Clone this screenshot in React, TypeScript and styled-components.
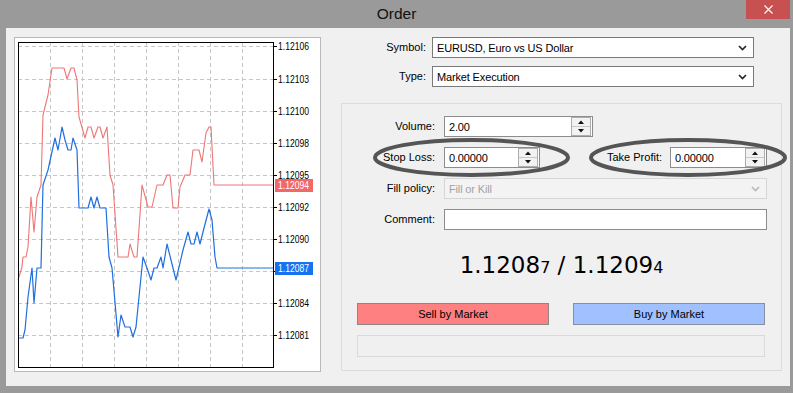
import styled, { createGlobalStyle } from 'styled-components';

const GlobalStyle = createGlobalStyle`
  html, body {
    margin: 0;
    padding: 0;
  }
  body {
    background: #9a9a9a;
    font-family: 'Liberation Sans', Arial, sans-serif;
  }
`;

const Window = styled.div`
  width: 793px;
  height: 393px;
  display: flex;
  flex-direction: column;
  overflow: hidden;
`;

const TitleBar = styled.div`
  height: 28px;
  flex-shrink: 0;
  display: grid;
  grid-template-columns: 1fr auto 1fr;
  align-items: start;
`;

const Title = styled.div`
  grid-column: 2;
  font-size: 15.5px;
  line-height: 18px;
  padding-top: 5px;
  color: #111;
`;

const CloseButton = styled.div`
  justify-self: end;
  width: 44px;
  height: 19px;
  margin-right: 3px;
  background: #c75050;
  display: flex;
  align-items: center;
  justify-content: center;
`;

const Body = styled.div`
  margin: 0 3px 0 6px;
  height: 358px;
  box-sizing: border-box;
  padding: 9px 0 0 8px;
  background: #f0f0f0;
  display: flex;
  align-items: flex-start;
`;

const ChartPanel = styled.div`
  width: 307px;
  height: 335px;
  flex-shrink: 0;
  box-sizing: border-box;
  border: 1px solid #b9b9b9;
  background: #fff;
`;

const ChartSvg = styled.svg`
  display: block;
`;

const FormSide = styled.div`
  margin-left: 20px;
  width: 441px;
  display: flex;
  flex-direction: column;
`;

const TopGrid = styled.div`
  display: grid;
  grid-template-columns: 85px 322px;
  grid-auto-rows: 21px;
  column-gap: 6px;
  row-gap: 8px;
`;

const Label = styled.div`
  font-size: 11px;
  line-height: 21px;
  text-align: right;
  color: #000;
  white-space: nowrap;
`;

const Field = styled.div<{ $width: number; $disabled?: boolean; $combo?: boolean }>`
  width: ${(p) => p.$width}px;
  height: 21px;
  box-sizing: border-box;
  border: 1px solid ${(p) => (p.$disabled ? '#d6d6d6' : p.$combo ? '#7a7a7a' : '#8c8c8c')};
  background: ${(p) => (p.$disabled ? '#f3f3f3' : '#fff')};
  color: ${(p) => (p.$disabled ? '#a2a2a2' : '#000')};
  display: flex;
  align-items: center;
  padding: 0 1px 0 4px;
  font-size: 11px;
  letter-spacing: -0.15px;
`;

const FieldValue = styled.span`
  flex: 1;
  white-space: nowrap;
`;

const Chevron = styled.svg`
  margin-right: 5px;
  flex-shrink: 0;
`;

const Spinner = styled.div`
  width: 20px;
  height: 19px;
  box-sizing: border-box;
  border: 1px solid #adadad;
  background: #f2f2f2;
  display: flex;
  flex-direction: column;
  flex-shrink: 0;
`;

const SpinHalf = styled.div<{ $bottom?: boolean }>`
  flex: 1;
  display: flex;
  align-items: center;
  justify-content: center;
  border-top: ${(p) => (p.$bottom ? '1px solid #c8c8c8' : 'none')};
`;

const Group = styled.div`
  position: relative;
  margin-top: 16px;
  height: 268px;
  box-sizing: border-box;
  border: 1px solid #dcdcdc;
  padding-top: 12px;
`;

const FieldGrid = styled.div`
  display: grid;
  grid-template-columns: 93px 323px;
  grid-auto-rows: 21px;
  column-gap: 9px;
  row-gap: 10px;
`;

const PairCell = styled.div`
  display: flex;
  align-items: center;
`;

const PairLabel = styled(Label)`
  flex: 1;
  padding-right: 8px;
`;

const Price = styled.div`
  margin-top: 21px;
  height: 28px;
  text-align: center;
  font-family: 'DejaVu Sans', Verdana, sans-serif;
  font-size: 23px;
  line-height: 28px;
  color: #000;
`;

const PriceTail = styled.span`
  font-size: 16px;
  line-height: 0;
`;

const ButtonRow = styled.div`
  margin-top: 24px;
  padding-left: 15px;
  display: grid;
  grid-template-columns: 192px 192px;
  column-gap: 24px;
`;

const MarketButton = styled.div<{ $side: 'sell' | 'buy' }>`
  height: 22px;
  box-sizing: border-box;
  border: 1px solid ${(p) => (p.$side === 'sell' ? '#8e8686' : '#8790a2')};
  background: ${(p) => (p.$side === 'sell' ? '#ff8080' : '#a0c0ff')};
  font-size: 11px;
  line-height: 20px;
  text-align: center;
  color: #000;
`;

const StatusBox = styled.div`
  margin: 10px 0 0 15px;
  width: 408px;
  height: 22px;
  box-sizing: border-box;
  border: 1px solid #dadada;
`;

const Highlight = styled.svg<{ $left: number }>`
  position: absolute;
  top: 34px;
  left: ${(p) => p.$left}px;
  overflow: visible;
  pointer-events: none;
`;

const gridY = [46, 79, 111, 143, 175, 207, 239, 271, 303, 335];
const gridX = [50, 82, 114, 146, 178, 210, 242];
const axisLabels: [number, string][] = [
  [46, '1.12106'],
  [79, '1.12103'],
  [111, '1.12100'],
  [143, '1.12098'],
  [175, '1.12095'],
  [207, '1.12092'],
  [239, '1.12090'],
  [303, '1.12084'],
  [335, '1.12081'],
];

const askLine =
  '18,280 22,267 23,257 26,257 28,247 31,197 34,232 37,197 41,185 43,115 48,95 52,68 64,68 67,79 71,68 74,68 77,80 79,117 85,138 88,127 91,127 94,138 98,127 100,127 103,138 107,127 110,175 113,185 118,257 128,257 130,244 134,257 137,257 141,200 142,185 148,207 152,207 157,185 163,185 167,175 170,175 173,208 178,208 180,187 185,175 190,175 193,150 199,150 202,162 206,133 209,127 211,127 214,185 273,185';

const bidLine =
  '18,338 23,338 25,330 28,297 32,268 34,303 37,268 41,268 43,185 48,170 55,138 58,150 62,127 65,140 68,150 71,150 73,138 77,150 79,208 88,208 91,197 94,208 97,197 100,208 106,208 109,257 112,268 118,337 121,315 125,327 130,327 133,337 136,327 143,257 147,268 151,280 154,268 157,268 161,257 163,268 167,244 171,260 176,280 183,250 188,232 191,244 194,244 197,232 200,244 203,232 209,209 212,220 215,257 217,268 273,268';

const TickChart = () => (
  <ChartSvg width={305} height={333} viewBox="15 38 305 333">
    {gridY.map((y) => (
      <line key={`h${y}`} x1={18} x2={273} y1={y + 0.5} y2={y + 0.5} stroke="#c6c6c6" strokeDasharray="4 3" />
    ))}
    {gridX.map((x) => (
      <line key={`v${x}`} x1={x + 0.5} x2={x + 0.5} y1={42} y2={367} stroke="#c6c6c6" strokeDasharray="4 3" />
    ))}
    <polyline points={askLine} fill="none" stroke="#ee7676" strokeWidth={1.1} strokeLinejoin="round" />
    <polyline points={bidLine} fill="none" stroke="#1f6fe0" strokeWidth={1.2} strokeLinejoin="round" />
    <rect x={18.5} y={42.5} width={255} height={325} fill="none" stroke="#000" />
    {gridY.map((y) => (
      <line key={`t${y}`} x1={273} x2={277} y1={y + 0.5} y2={y + 0.5} stroke="#000" />
    ))}
    <g fontFamily="'Liberation Sans', Arial, sans-serif" fontSize={10} fill="#000">
      {axisLabels.map(([y, t]) => (
        <text key={t} x={278} y={y + 4} textLength={31} lengthAdjust="spacingAndGlyphs">
          {t}
        </text>
      ))}
      <rect x={275} y={179} width={38} height={13} fill="#f26767" />
      <text x={278} y={189} fill="#fff" textLength={31} lengthAdjust="spacingAndGlyphs">
        1.12094
      </text>
      <rect x={275} y={262} width={38} height={13} fill="#1672f0" />
      <text x={278} y={272} fill="#fff" textLength={31} lengthAdjust="spacingAndGlyphs">
        1.12087
      </text>
    </g>
  </ChartSvg>
);

const ComboChevron = ({ color = '#222' }: { color?: string }) => (
  <Chevron width={9} height={6} viewBox="0 0 9 6">
    <polyline points="1,1 4.5,4.5 8,1" fill="none" stroke={color} strokeWidth={1.6} />
  </Chevron>
);

const SpinButtons = () => (
  <Spinner>
    <SpinHalf>
      <svg width={6} height={4} viewBox="0 0 6 4">
        <polygon points="0,4 3,0.5 6,4" fill="#111" />
      </svg>
    </SpinHalf>
    <SpinHalf $bottom>
      <svg width={6} height={4} viewBox="0 0 6 4">
        <polygon points="0,0 6,0 3,3.5" fill="#111" />
      </svg>
    </SpinHalf>
  </Spinner>
);

const Ring = ({ left, width }: { left: number; width: number }) => (
  <Highlight $left={left} width={width} height={39} viewBox={`0 0 ${width} 39`}>
    <ellipse cx={width / 2} cy={19.5} rx={width / 2 - 2} ry={17.5} fill="none" stroke="#555" strokeWidth={4} />
  </Highlight>
);

export default function App() {
  return (
    <>
      <GlobalStyle />
      <Window>
        <TitleBar>
          <Title>Order</Title>
          <CloseButton>
            <svg width={9} height={9} viewBox="0 0 9 9">
              <path d="M0.5 0.5 L8.5 8.5 M8.5 0.5 L0.5 8.5" stroke="#fff" strokeWidth={1.1} />
            </svg>
          </CloseButton>
        </TitleBar>
        <Body>
          <ChartPanel>
            <TickChart />
          </ChartPanel>
          <FormSide>
            <TopGrid>
              <Label>Symbol:</Label>
              <Field $width={322} $combo>
                <FieldValue>EURUSD, Euro vs US Dollar</FieldValue>
                <ComboChevron />
              </Field>
              <Label>Type:</Label>
              <Field $width={322} $combo>
                <FieldValue>Market Execution</FieldValue>
                <ComboChevron />
              </Field>
            </TopGrid>
            <Group>
              <FieldGrid>
                <Label>Volume:</Label>
                <Field $width={149}>
                  <FieldValue>2.00</FieldValue>
                  <SpinButtons />
                </Field>
                <Label>Stop Loss:</Label>
                <PairCell>
                  <Field $width={96}>
                    <FieldValue>0.00000</FieldValue>
                    <SpinButtons />
                  </Field>
                  <PairLabel>Take Profit:</PairLabel>
                  <Field $width={97}>
                    <FieldValue>0.00000</FieldValue>
                    <SpinButtons />
                  </Field>
                </PairCell>
                <Label>Fill policy:</Label>
                <Field $width={323} $disabled>
                  <FieldValue>Fill or Kill</FieldValue>
                  <ComboChevron color="#b8b8b8" />
                </Field>
                <Label>Comment:</Label>
                <Field $width={323}>
                  <FieldValue />
                </Field>
              </FieldGrid>
              <Price>
                1.1208<PriceTail>7</PriceTail> / 1.1209<PriceTail>4</PriceTail>
              </Price>
              <ButtonRow>
                <MarketButton $side="sell">Sell by Market</MarketButton>
                <MarketButton $side="buy">Buy by Market</MarketButton>
              </ButtonRow>
              <StatusBox />
              <Ring left={31} width={197} />
              <Ring left={247} width={198} />
            </Group>
          </FormSide>
        </Body>
      </Window>
    </>
  );
}
